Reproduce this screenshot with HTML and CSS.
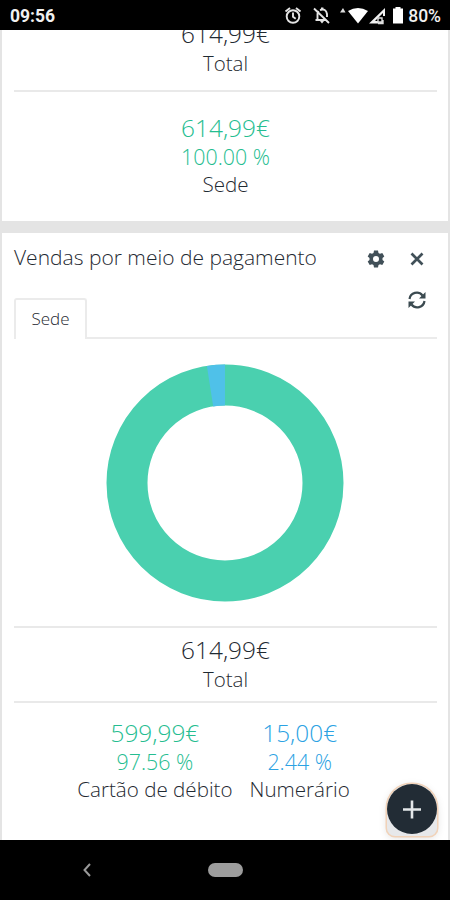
FILE: index.html
```html
<!DOCTYPE html>
<html lang="pt">
<head>
<meta charset="utf-8">
<title>Vendas</title>
<link rel="stylesheet" href="styles.css">
</head>
<body>
<div class="phone">
  <header class="status">
    <span class="clock">09:56</span>
    <svg class="status-icons" width="136" height="30" viewBox="0 0 136 30">
      <g fill="none" stroke="#e4e4e4" stroke-width="1.9">
        <circle cx="22" cy="16.5" r="6.3"/>
        <path d="M22 12.5v4.3l2.700 2M14.500 11.500l4.500-3.500M29.500 11.500l-4.500-3.500"/>
        <path d="M44.500 20h11M46.500 19v-5q0-1.500 1-3M49 10q6-2 7 4v3M43 8.500l15 14.500"/>
      </g>
      <path d="M49 21h4l-2 2.500zM50 7.500h2.400v2.500h-2.400z" fill="#e4e4e4"/>
      <path d="M69 12.500l3-4.500 2.500 4.500z" fill="#ddd"/>
      <path d="M77 11q10-6 20 0l-10 12.500z" fill="#fff"/>
      <path d="M98 23.500L114 8v8h-2v-3l-8 8h3v2.500z" fill="#f2f2f2"/>
      <path d="M107 18h4v4h-4zM112 20v3.500h-5" fill="none" stroke="#ddd" stroke-width="1.400"/>
      <path d="M122 8.500h2.500V7h5v1.500h2.500v15h-10z" fill="#fff"/>
    </svg>
    <span class="battery">80%</span>
  </header>

  <main class="board">
    <section class="card card-first">
      <div class="total">
        <div class="amount">614,99€</div>
        <div class="label">Total</div>
      </div>
      <div class="legend">
        <div class="entry green">
          <div class="amount">614,99€</div>
          <div class="percent">100.00 %</div>
          <div class="name">Sede</div>
        </div>
      </div>
    </section>

    <section class="card card-second">
      <div class="card-head">
        <h2>Vendas por meio de pagamento</h2>
        <svg class="icon gear" width="18" height="18" viewBox="0 0 18 18">
          <path fill="#415058" fill-rule="evenodd" d="M7 0.500h4l.5 2.400 1.500.9 2.300-.8 2 3.400-1.800 1.700v1.800l1.800 1.700-2 3.400-2.300-.8-1.500.9-.5 2.400H7l-.5-2.400-1.500-.9-2.300.8-2-3.400 1.800-1.700V8.100L.7 6.400l2-3.400 2.300.8 1.500-.9zM9 6a3 3 0 1 0 0 6a3 3 0 1 0 0-6z"/>
        </svg>
        <svg class="icon" width="14" height="14" viewBox="0 0 14 14">
          <path d="M1.500 1.500l11 11M12.500 1.500L1.500 12.500" stroke="#415058" stroke-width="2.700"/>
        </svg>
      </div>
      <div class="refresh">
        <svg width="18" height="18" viewBox="0 0 18 18">
          <path d="M1.500 8a7.300 7.300 0 0 1 13-3.500M16.500 10a7.300 7.300 0 0 1-13 3.500" fill="none" stroke="#3b4a50" stroke-width="2.200"/>
          <path d="M17.500 1v6.500H11zM.5 17v-6.500H7z" fill="#3b4a50"/>
        </svg>
      </div>
      <nav class="tabs"><span class="tab">Sede</span></nav>
      <svg class="donut" width="238" height="238" viewBox="-119 -119 238 238">
        <circle r="98" fill="none" stroke="#4ad0af" stroke-width="41"/>
        <path d="M0-118.500A118.500 118.500 0 0 0-18.100-117.100L-11.800-76.600A77.500 77.500 0 0 1 0-77.500z" fill="#4fc1e9"/>
      </svg>
      <div class="total total-framed">
        <div class="amount">614,99€</div>
        <div class="label">Total</div>
      </div>
      <div class="legend">
        <div class="entry green">
          <div class="amount">599,99€</div>
          <div class="percent">97.56 %</div>
          <div class="name">Cartão de débito</div>
        </div>
        <div class="entry blue">
          <div class="amount">15,00€</div>
          <div class="percent">2.44 %</div>
          <div class="name">Numerário</div>
        </div>
      </div>
    </section>
    <div class="fab">
      <svg width="50" height="50" viewBox="0 0 50 50">
        <circle cx="25" cy="25" r="25" fill="#222c35"/>
        <path d="M16 25.500h18M25 16.500v18" stroke="#e4e7e9" stroke-width="2.600"/>
      </svg>
    </div>
  </main>

  <footer class="navbar">
    <svg class="back" width="10" height="16" viewBox="0 0 10 16"><path d="M8 2L2.500 8 8 14" fill="none" stroke="#999" stroke-width="2"/></svg>
    <span class="home"></span>
  </footer>
</div>
</body>
</html>
```
FILE: styles.css
```css
* { box-sizing: border-box; }
body {
  margin: 0;
  font-family: "Open Sans", sans-serif;
  font-weight: 300;
  color: #1f2a32;
}
.phone {
  width: 450px;
  height: 900px;
  display: flex;
  flex-direction: column;
  overflow: hidden;
}
.status {
  flex: none;
  height: 30px;
  padding: 2px 9px 0 10px;
  display: flex;
  align-items: center;
  background: #000;
  color: #f0f0f0;
  font-family: Roboto, sans-serif;
  font-size: 17.5px;
  font-weight: 500;
}
.clock { font-weight: 700; }
.status-icons { margin: -2px 1px 0 auto; }
.board {
  position: relative;
  flex: none;
  height: 810px;
  overflow: hidden;
  padding: 0 2px;
  background: #e4e4e4;
}
.card { background: #fff; padding: 0 11px 0 12px; overflow: hidden; }
.card-first { height: 191px; margin-bottom: 12px; }
.card-second { height: 607px; }
.total {
  display: flow-root;
  text-align: center;
  border-bottom: 2px solid #e9e9e9;
}
.card-first .total { height: 62px; }
.card-first .total .amount { margin-top: -11px; }
.amount { font-size: 24.4px; line-height: 30px; }
.label { font-size: 20.5px; line-height: 29px; }
.total-framed {
  height: 77px;
  padding-top: 7px;
  border-top: 2px solid #e9e9e9;
}
.legend {
  display: flex;
  justify-content: center;
  gap: 17px;
  padding-top: 21px;
  text-align: center;
}
.card-second .legend { padding: 15px 24px 0 0; }
.percent { font-size: 21.4px; line-height: 28px; }
.name { font-size: 20.6px; line-height: 26px; }
.green .amount, .green .percent { color: #25bd90; }
.blue .amount, .blue .percent { color: #2ba2e3; }
.card-head {
  height: 52px;
  padding-right: 13px;
  display: flex;
  align-items: center;
}
h2 {
  margin: -4px auto 0 0;
  font-size: 21px;
  line-height: 28px;
  font-weight: 300;
  white-space: nowrap;
}
.gear { margin-right: 25px; }
.refresh { height: 13px; display: flex; justify-content: flex-end; padding: 6px 11px 0 0; }
.refresh svg { flex: none; }
.tabs { height: 41px; display: flex; border-bottom: 2px solid #ebebeb; }
.tab {
  width: 73px;
  height: 41px;
  border: 2px solid #ebebeb;
  border-bottom: 0;
  border-radius: 3px 3px 0 0;
  background: #fff;
  font-size: 17px;
  line-height: 38px;
  text-align: center;
}
.donut { display: block; margin: 25px 0 24px 92px; }
.fab {
  position: absolute;
  left: 387px;
  top: 754px;
  width: 50px;
  height: 52px;
  border-radius: 24px 24px 8px 8px;
  background: #e7e8ea;
  box-shadow: 0 0 0 1.5px #f1d2b8, 0 2px 9px #0002;
}
.fab svg { display: block; }
.navbar {
  flex: none;
  height: 60px;
  background: #000;
  display: flex;
  align-items: center;
  padding-left: 82px;
}
.home {
  width: 35px;
  height: 14px;
  margin-left: 116px;
  border-radius: 7px;
  background: #9c9c9c;
}
```
